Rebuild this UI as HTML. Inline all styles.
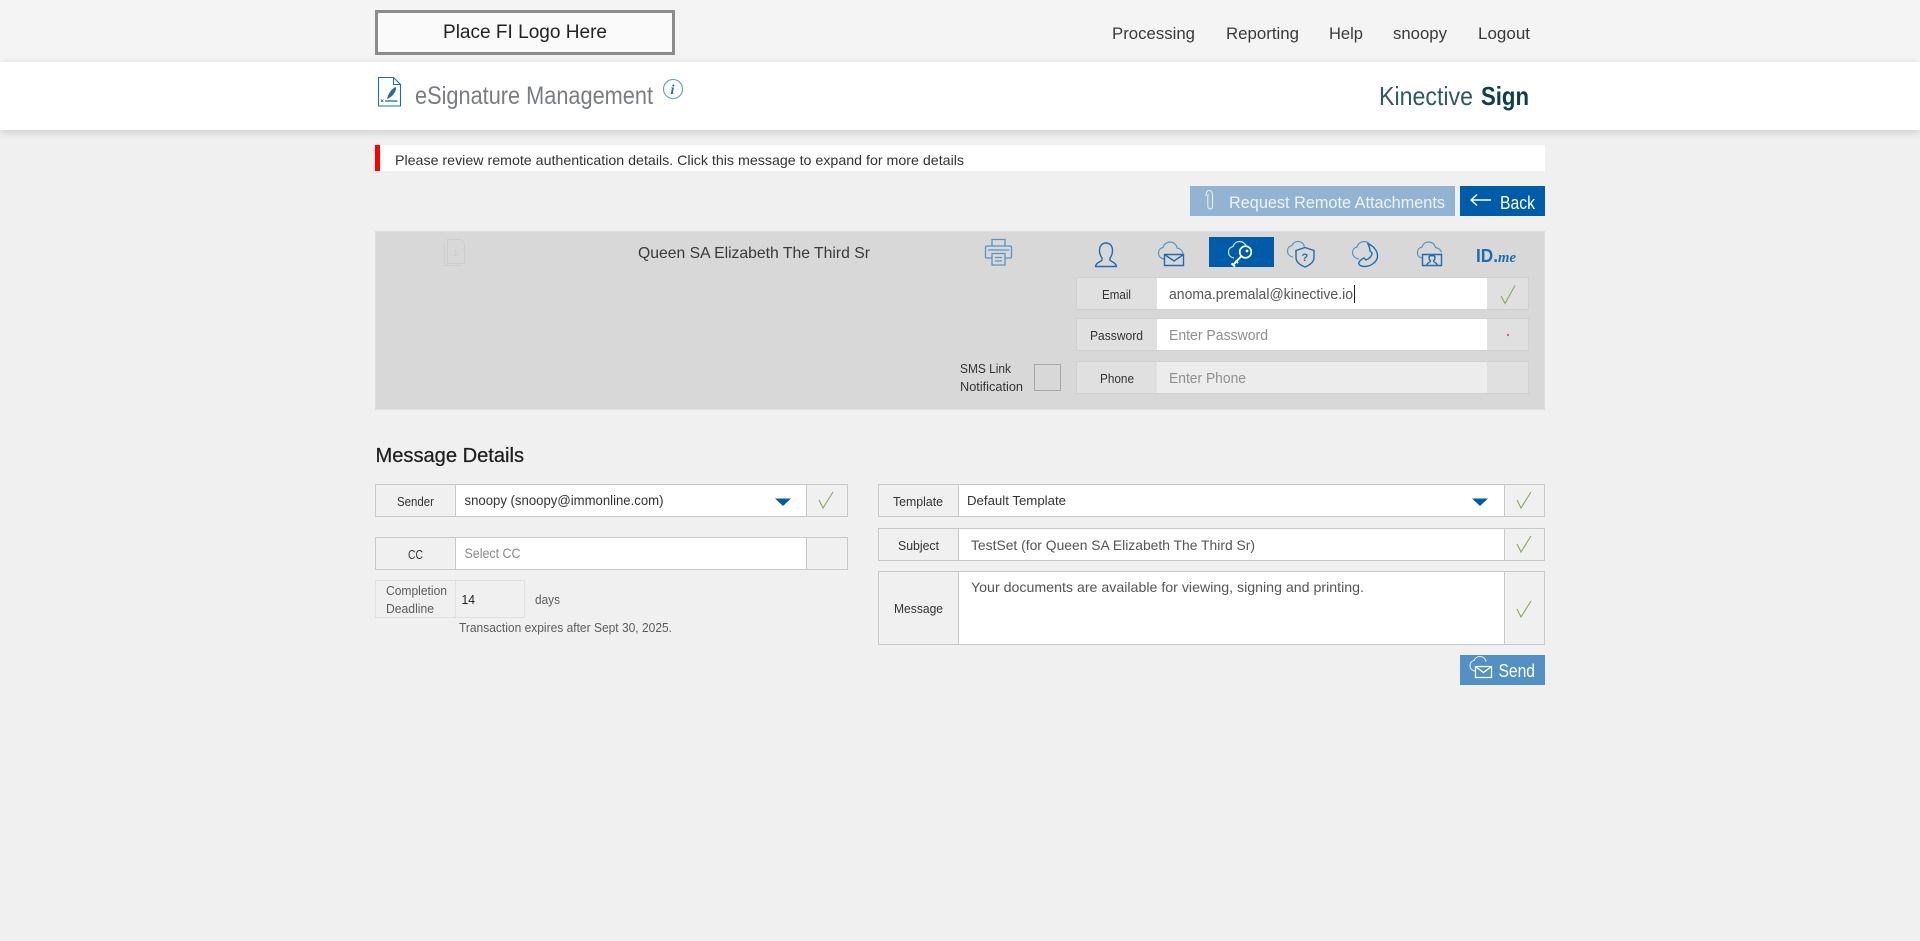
<!DOCTYPE html>
<html lang="en">
<head>
<meta charset="utf-8">
<title>eSignature Management</title>
<style>
html,body{margin:0;padding:0;width:1920px;height:941px;overflow:hidden;background:#f0f0f0;font-family:"Liberation Sans",sans-serif}
.b{position:absolute;box-sizing:border-box}
svg{position:absolute;left:0;top:0}
text{font-family:"Liberation Sans",sans-serif;white-space:pre}
.cell{background:#f0f0f0;border:1px solid #c9c9c9}
.p{background:#e0e0e0;border:1px solid #d0d0d0}
.ln{fill:none;stroke:#1f6cb0;stroke-width:1.4}
.cl{fill:none;stroke:#5a93c2;stroke-width:1.2}
.ck{fill:none;stroke:#86a866;stroke-width:1.1}
</style>
</head>
<body>
<div class="b" style="left:0;top:0;width:1920px;height:62px;background:#f4f4f4"></div>
<div class="b" style="left:0;top:62px;width:1920px;height:68px;background:#fff;box-shadow:0 2px 8px rgba(0,0,0,.16)"></div>
<div class="b" style="left:375px;top:10px;width:300px;height:45px;background:#fafafa;border:3px solid #8c8c8c"></div>

<div class="b" style="left:375px;top:145px;width:1170px;height:26px;background:#fff;border-left:5px solid #f00"></div>
<div class="b" style="left:1190px;top:186px;width:265px;height:30px;background:#92b4d2"></div>
<div class="b" style="left:1460px;top:186px;width:85px;height:30px;background:#005ca9"></div>

<div class="b" style="left:375px;top:231px;width:1170px;height:179px;background:#d8d8d8;border:1px solid #dfdfdf"></div>
<div class="b" style="left:1209px;top:237px;width:65px;height:30px;background:#005ca9"></div>

<div class="b p" style="left:1076px;top:277px;width:453px;height:33px"></div>
<div class="b" style="left:1157px;top:278px;width:330px;height:31px;background:#fff"></div>
<div class="b p" style="left:1076px;top:318px;width:453px;height:33px"></div>
<div class="b" style="left:1157px;top:319px;width:330px;height:31px;background:#fff"></div>
<div class="b p" style="left:1076px;top:361px;width:453px;height:33px"></div>
<div class="b" style="left:1157px;top:362px;width:330px;height:31px;background:#ececec"></div>
<div class="b" style="left:1034px;top:364px;width:27px;height:27px;border:1px solid #a8a8a8"></div>

<div class="b cell" style="left:375px;top:484px;width:473px;height:33px"></div>
<div class="b" style="left:455px;top:485px;width:352px;height:31px;background:#fff;border-left:1px solid #c9c9c9;border-right:1px solid #c9c9c9"></div>
<div class="b cell" style="left:375px;top:537px;width:473px;height:33px"></div>
<div class="b" style="left:455px;top:538px;width:352px;height:31px;background:#fff;border-left:1px solid #c9c9c9;border-right:1px solid #c9c9c9"></div>
<div class="b" style="left:375px;top:580px;width:150px;height:38px;border:1px solid #e0e0e0"></div>
<div class="b" style="left:455px;top:580px;width:1px;height:38px;background:#e0e0e0"></div>

<div class="b cell" style="left:878px;top:484px;width:667px;height:33px"></div>
<div class="b" style="left:958px;top:485px;width:547px;height:31px;background:#fff;border-left:1px solid #c9c9c9;border-right:1px solid #c9c9c9"></div>
<div class="b cell" style="left:878px;top:528px;width:667px;height:33px"></div>
<div class="b" style="left:958px;top:529px;width:547px;height:31px;background:#fff;border-left:1px solid #c9c9c9;border-right:1px solid #c9c9c9"></div>
<div class="b cell" style="left:878px;top:571px;width:667px;height:74px"></div>
<div class="b" style="left:958px;top:572px;width:547px;height:72px;background:#fff;border-left:1px solid #c9c9c9;border-right:1px solid #c9c9c9"></div>
<div class="b" style="left:1460px;top:655px;width:85px;height:30px;background:#5390c3"></div>

<svg width="1920" height="941" viewBox="0 0 1920 941" xmlns="http://www.w3.org/2000/svg">
<text x="443" y="38" font-size="19" fill="#222" textLength="164" lengthAdjust="spacingAndGlyphs">Place FI Logo Here</text>
<g font-size="17" fill="#3a3a3a">
<text x="1112" y="39" textLength="83" lengthAdjust="spacingAndGlyphs">Processing</text>
<text x="1226" y="39" textLength="73" lengthAdjust="spacingAndGlyphs">Reporting</text>
<text x="1329" y="39" textLength="34" lengthAdjust="spacingAndGlyphs">Help</text>
<text x="1393" y="39" textLength="54" lengthAdjust="spacingAndGlyphs">snoopy</text>
<text x="1478" y="39" textLength="52" lengthAdjust="spacingAndGlyphs">Logout</text>
</g>
<text x="415" y="104" font-size="25" fill="#797d81" textLength="238" lengthAdjust="spacingAndGlyphs">eSignature Management</text>
<text x="1379" y="105" font-size="26" fill="#2f5a60" textLength="94" lengthAdjust="spacingAndGlyphs">Kinective</text>
<text x="1481" y="105" font-size="26" font-weight="700" fill="#0f3f46" textLength="48" lengthAdjust="spacingAndGlyphs">Sign</text>

<!-- doc signature icon -->
<path d="M378.500 77.500h15l7 7v21.500h-22z M393.500 77.500v7h7" fill="none" stroke="#1f6cb0" stroke-width="1.1"/>
<path d="M387 99c1-5 5-11 9-12 .5 4-3 9-7 11z" fill="#1f6cb0"/>
<path d="M385 101h12.500" stroke="#1f6cb0" stroke-width="1.3"/>
<path d="M381 99.500l2.500 2.500m0-2.500l-2.500 2.500" stroke="#1f6cb0" stroke-width=".8"/>
<!-- info -->
<circle cx="673" cy="89" r="9.500" fill="#fff" stroke="#5a9ac8" stroke-width="1.1"/>
<text x="670.500" y="94" font-size="14" font-weight="700" font-style="italic" fill="#1f6cb0" style="font-family:'Liberation Serif',serif">i</text>

<text x="395" y="165" font-size="14" fill="#333" textLength="569" lengthAdjust="spacingAndGlyphs">Please review remote authentication details. Click this message to expand for more details</text>

<!-- clip -->
<path d="M1206 196c0-3.500 1.200-5.500 3.200-5.500s3.300 2 3.300 5.500v10c0 2-.8 3-2.300 3s-2.400-1-2.400-3v-10c0-1 .4-1.500 1-1.500" fill="none" stroke="#e4ecf4" stroke-width="1.1"/>
<text x="1229" y="208" font-size="17" fill="#eef3f8" textLength="216" lengthAdjust="spacingAndGlyphs">Request Remote Attachments</text>
<path d="M1471 200h20M1477 194.500l-6 5.500 6 5.500" fill="none" stroke="#fff" stroke-width="1.4"/>
<text x="1500" y="209" font-size="18" fill="#fff" textLength="35" lengthAdjust="spacingAndGlyphs">Back</text>

<!-- page count icon -->
<path d="M447.500 239.500h13l4 4v20h-17z M444.500 243v22.500h17" fill="none" stroke="#cdcdcd" stroke-width="1"/>
<text x="453" y="256" font-size="9" fill="#cdcdcd">1</text>
<text x="638" y="258" font-size="16" fill="#3a3a3a" textLength="232" lengthAdjust="spacingAndGlyphs">Queen SA Elizabeth The Third Sr</text>

<!-- printer -->
<g fill="none" stroke="#5a93c2" stroke-width="1.3">
<path d="M992 246v-6.500h13v6.500"/>
<path d="M992 258h-5.500c-.8 0-1-.5-1-1v-9.500c0-1 .5-1.500 1.500-1.500h23c1 0 1.500.5 1.500 1.500v9.500c0 .5-.3 1-1 1h-5.500"/>
<path d="M992 253.500h13v11.500h-13z"/>
<path d="M995 257.500h7M995 261h7M988 250h21"/>
</g>
<!-- person -->
<path class="ln" d="M1106 243c-4 0-6.500 3-6.500 7.500 0 3 1 5.500 2.500 7.500v2c0 1.500-6 2-6.500 6.500h21c-.5-4.500-6.500-5-6.500-6.500v-2c1.500-2 2.500-4.500 2.500-7.500 0-4.500-2.500-7.500-6.500-7.500z"/>
<!-- mail cloud -->
<path class="cl" d="M1164 259c-3.500-.5-5.500-3-5.500-6 0-3 2-5 4.500-5.500 1-3.500 4-5.500 7-5.500 3.500 0 6.500 2.500 7 6 3 .5 5.500 2.500 6 5.500"/>
<path class="ln" d="M1164.500 254.500h19v11h-19zM1164.500 254.500l9.500 6.500 9.500-6.500"/>
<!-- key cloud active -->
<path d="M1234 258c-3-.5-5.500-2.500-5.500-6 0-3 2-5 4.500-5.500 1-3 3.500-5 6.500-5 2.500 0 5 1.500 6.500 4" fill="none" stroke="#d6e4f1" stroke-width="1.2"/>
<circle cx="1245.500" cy="252" r="5.800" fill="#005ca9" stroke="#fff" stroke-width="1.7"/>
<circle cx="1247" cy="251" r="1.400" fill="#fff"/>
<path d="M1241.500 256l-8.500 9m2 1.500l-3.500-3m6.500-.5l-2.500-2.500" fill="none" stroke="#fff" stroke-width="2"/>
<!-- shield cloud -->
<path class="cl" d="M1293 257c-3-.5-5.500-2.500-5.500-6 0-3 2-5 4.500-5.500 1-2.500 3.500-4 6-4 3 0 5.500 2 6.500 5"/>
<path class="ln" d="M1305 247.500l9 3v7c0 4.500-4 7.500-9 9.500-5-2-9-5-9-9.500v-7z"/>
<text x="1301.500" y="261" font-size="11" font-weight="700" fill="#1f6cb0">?</text>
<!-- phone cloud -->
<path class="cl" d="M1359 259c-3.500-.5-6.500-3-6.500-6.500 0-3 2-5 4.500-5.500 1-3.500 4-5.500 7-5.500 3 0 5 1.500 6.500 3.500"/>
<path class="ln" d="M1368 244c6 2 9.500 7 9.500 12 0 6-7 10.500-13 10.500-4 0-6.500-2-5.500-4.200 1-2 3-3.300 5-4.300l2 2c3-1 6-4 6-7l-2-2c0-2-1-5-2-7z"/>
<!-- video cloud -->
<path class="cl" d="M1422 258c-3-.5-4.500-2.500-4.500-5.500 0-3 2-5 4.500-5.500 1-3 3.500-5 6.500-5 3.500 0 6 2 7 5.500 3 .5 5.500 2.500 6 5"/>
<path class="ln" d="M1422.500 254.500h19v11h-19z"/>
<path class="ln" d="M1427 265c0-2.500 3.500-2.500 3.500-4-1-1-1.500-2-1.500-3.500s1-2 3-2 3 .5 3 2-.5 2.500-1.500 3.500c0 1.500 3.500 1.500 3.500 4" stroke-width="1"/>
<!-- ID.me -->
<text x="1476" y="262" font-size="18" font-weight="700" fill="#1f6cb0" textLength="22" lengthAdjust="spacingAndGlyphs">ID.</text>
<text x="1498" y="262" font-size="15" font-weight="700" font-style="italic" fill="#1f6cb0" textLength="18" lengthAdjust="spacingAndGlyphs" style="font-family:'Liberation Serif',serif">me</text>

<g font-size="13" fill="#333">
<text x="1102" y="299" textLength="29" lengthAdjust="spacingAndGlyphs">Email</text>
<text x="1090" y="340" textLength="53" lengthAdjust="spacingAndGlyphs">Password</text>
<text x="1100" y="383" textLength="34" lengthAdjust="spacingAndGlyphs">Phone</text>
<text x="960" y="373" textLength="51" lengthAdjust="spacingAndGlyphs">SMS Link</text>
<text x="960" y="391" textLength="63" lengthAdjust="spacingAndGlyphs">Notification</text>
</g>
<text x="1169" y="299" font-size="15" fill="#555" textLength="184" lengthAdjust="spacingAndGlyphs">anoma.premalal@kinective.io</text>
<path d="M1354.500 285v18" stroke="#222" stroke-width="1"/>
<text x="1169" y="340" font-size="15" fill="#8f8f8f" textLength="99" lengthAdjust="spacingAndGlyphs">Enter Password</text>
<text x="1169" y="383" font-size="15" fill="#8f8f8f" textLength="77" lengthAdjust="spacingAndGlyphs">Enter Phone</text>
<path class="ck" d="M1501 296l4 7.500 10-18"/>
<circle cx="1508" cy="335" r="1.200" fill="#e4606a"/>

<text x="375.500" y="462" font-size="20" fill="#1f1f1f" stroke="#1f1f1f" stroke-width=".25" textLength="148.500" lengthAdjust="spacingAndGlyphs">Message Details</text>

<g font-size="13" fill="#333">
<text x="397" y="506" textLength="37" lengthAdjust="spacingAndGlyphs">Sender</text>
<text x="408" y="559" textLength="15" lengthAdjust="spacingAndGlyphs">CC</text>
<text x="893" y="506" textLength="50" lengthAdjust="spacingAndGlyphs">Template</text>
<text x="898" y="550" textLength="41" lengthAdjust="spacingAndGlyphs">Subject</text>
<text x="894" y="613" textLength="49" lengthAdjust="spacingAndGlyphs">Message</text>
</g>
<text x="464.500" y="505" font-size="14" fill="#333" textLength="199" lengthAdjust="spacingAndGlyphs">snoopy (snoopy@immonline.com)</text>
<text x="464.500" y="558" font-size="14" fill="#8a8a8a" textLength="56" lengthAdjust="spacingAndGlyphs">Select CC</text>
<path d="M775 498.500h16l-8 7.500z" fill="#005ca9"/>
<path d="M1472 498.500h16l-8 7.500z" fill="#005ca9"/>
<path class="ck" d="M819 500l4 8 10-16"/>
<path class="ck" d="M1517 500l4 8 10-16"/>
<path class="ck" d="M1517 544l4 8 10-16"/>
<path class="ck" d="M1517 609l4 8 10-16"/>

<g font-size="12.500" fill="#5c5c5c">
<text x="386" y="595" textLength="61" lengthAdjust="spacingAndGlyphs">Completion</text>
<text x="386" y="613" textLength="48" lengthAdjust="spacingAndGlyphs">Deadline</text>
<text x="535" y="604" textLength="25" lengthAdjust="spacingAndGlyphs">days</text>
<text x="459" y="632" textLength="213" lengthAdjust="spacingAndGlyphs">Transaction expires after Sept 30, 2025.</text>
</g>
<text x="461.500" y="604" font-size="13" fill="#222" textLength="13.500" lengthAdjust="spacingAndGlyphs">14</text>

<text x="967" y="505" font-size="13" fill="#333" textLength="99" lengthAdjust="spacingAndGlyphs">Default Template</text>
<text x="971" y="550" font-size="14" fill="#555" textLength="284" lengthAdjust="spacingAndGlyphs">TestSet (for Queen SA Elizabeth The Third Sr)</text>
<text x="971" y="592" font-size="14" fill="#555" textLength="393" lengthAdjust="spacingAndGlyphs">Your documents are available for viewing, signing and printing.</text>

<!-- send -->
<path d="M1475 671c-3-.5-5-2.500-5-5.500 0-2.500 1.500-4.500 4-5 1-2.500 3.500-4 6-4 3 0 5.500 2 6 5" fill="none" stroke="#e4eef7" stroke-width="1.1"/>
<path d="M1475.500 666.500h16v11h-16zM1475.500 666.500l8 6 8-6" fill="none" stroke="#fff" stroke-width="1.3"/>
<text x="1498.500" y="677" font-size="18" fill="#fff" textLength="36.500" lengthAdjust="spacingAndGlyphs">Send</text>
</svg>
</body>
</html>
